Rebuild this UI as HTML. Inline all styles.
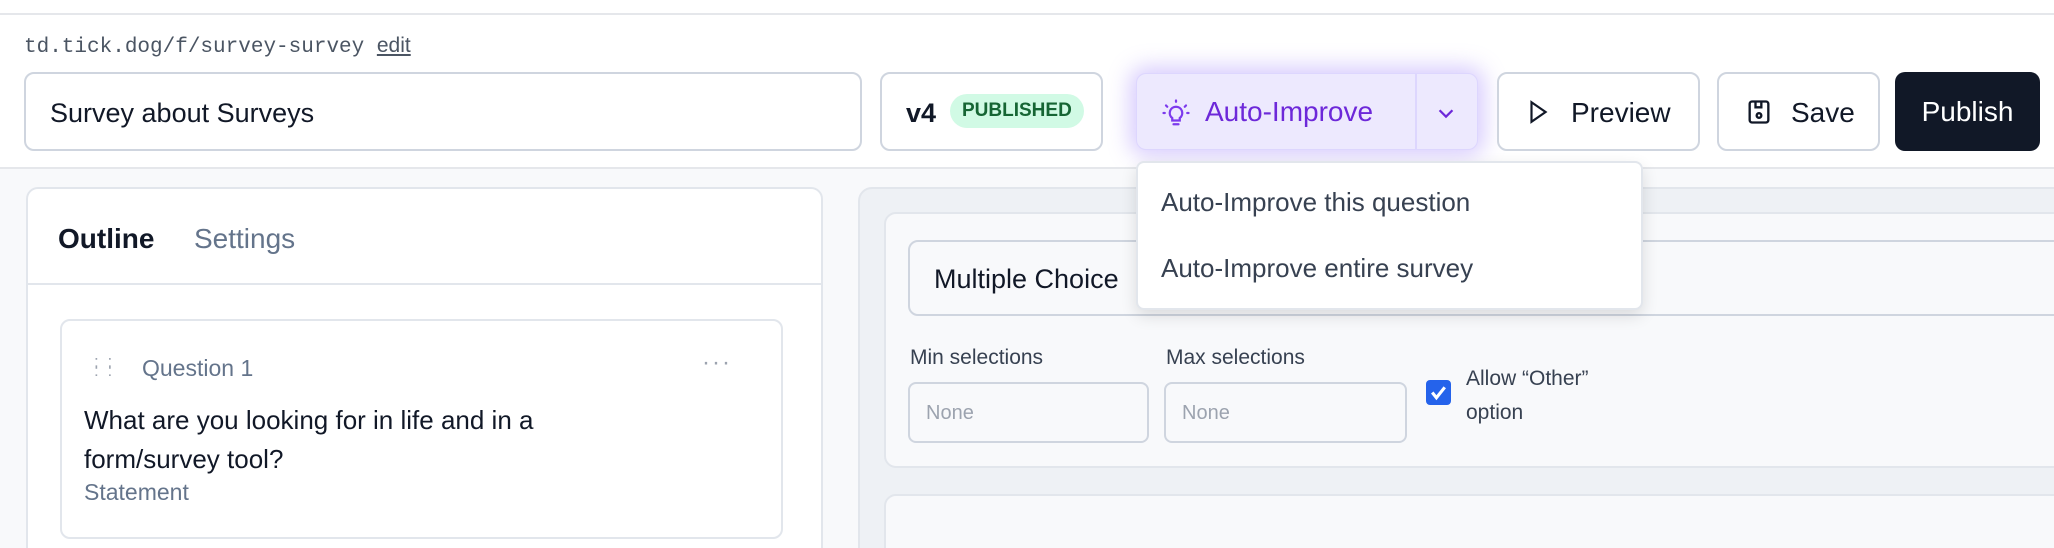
<!DOCTYPE html>
<html><head><meta charset="utf-8"><style>
*{box-sizing:border-box;margin:0;padding:0}
html{width:2054px;height:548px;overflow:hidden}
body{width:2054px;height:548px;overflow:hidden;background:#fff;font-family:"Liberation Sans",sans-serif;color:#111827;position:relative}
.a{position:absolute}
.box{position:absolute;border:2px solid #cfd5df;border-radius:10px;background:#fff}
</style></head><body>
<div class="a" style="left:0;top:13px;width:2054px;height:2px;background:#e5e7eb"></div>
<div class="a" style="left:24px;top:34px;font-family:'Liberation Mono',monospace;font-size:21px;color:#4b5563">td.tick.dog/f/survey-survey <span style="font-family:'Liberation Sans';text-decoration:underline;font-size:21px">edit</span></div>
<div class="box" style="left:24px;top:72px;width:838px;height:79px"><div class="a" style="left:24px;top:24px;font-size:27px">Survey about Surveys</div></div>
<div class="box" style="left:880px;top:72px;width:223px;height:79px"><div class="a" style="left:24px;top:24px;font-size:27px;font-weight:bold">v4</div><div class="a" style="left:68px;top:20px;height:34px;padding:0 12px;border-radius:17px;background:#d1fae5;color:#166534;font-weight:bold;font-size:19px;line-height:34px">PUBLISHED</div></div>
<div class="a" style="left:1136px;top:73px;width:342px;height:77px;border-radius:10px;background:#ede9fe;box-shadow:0 0 22px 6px rgba(167,139,250,.45);border:1px solid #ddd6fe">
 <svg class="a" style="left:24px;top:24px" width="30" height="30" viewBox="0 0 24 24" fill="none" stroke="#7c3aed" stroke-width="1.8" stroke-linecap="round"><path d="M9 18h6M10 21h4M12 7a5 5 0 0 0-3 9v2h6v-2a5 5 0 0 0-3-9z"/><path d="M12 2v1M4 6l1 1M20 6l-1 1M2 12h1M21 12h1"/></svg>
 <div class="a" style="left:68px;top:22px;font-size:28px;color:#6d28d9">Auto-Improve</div>
 <div class="a" style="left:278px;top:0;width:2px;height:75px;background:#ddd6fe"></div>
 <svg class="a" style="left:298px;top:28px" width="22" height="22" viewBox="0 0 24 24" fill="none" stroke="#6d28d9" stroke-width="2.5"><path d="M5 9l7 7 7-7"/></svg>
</div>
<div class="box" style="left:1497px;top:72px;width:203px;height:79px"><svg class="a" style="left:26px;top:24px" width="26" height="28" viewBox="0 0 24 24" fill="none" stroke="#111827" stroke-width="2"><path d="M6 3l13 9-13 9z"/></svg><div class="a" style="left:72px;top:23px;font-size:28px">Preview</div></div>
<div class="box" style="left:1717px;top:72px;width:163px;height:79px"><svg class="a" style="left:26px;top:24px" width="28" height="28" viewBox="0 0 24 24" fill="none" stroke="#111827" stroke-width="2"><rect x="4" y="3" width="16" height="18" rx="2"/><path d="M9 3v5h5V3"/><circle cx="12" cy="15" r="2"/></svg><div class="a" style="left:72px;top:23px;font-size:28px">Save</div></div>
<div class="a" style="left:1895px;top:72px;width:145px;height:79px;background:#111827;border-radius:10px;color:#fff;font-size:28px;text-align:center;line-height:79px">Publish</div>
<div class="a" style="left:0;top:167px;width:2054px;height:381px;background:#f8f9fb;border-top:2px solid #e5e7eb;overflow:hidden">
<div class="a" style="left:26px;top:18px;width:797px;height:380px;background:#fff;border:2px solid #e2e6ec;border-radius:12px">
 <div class="a" style="left:30px;top:34px;font-size:28px;font-weight:bold">Outline</div>
 <div class="a" style="left:166px;top:34px;font-size:28px;color:#64748b">Settings</div>
 <div class="a" style="left:0;top:94px;width:795px;height:2px;background:#e2e6ec"></div>
 <div class="a" style="left:32px;top:130px;width:723px;height:220px;border:2px solid #e2e6ec;border-radius:10px">
  <div class="a" style="left:32px;top:36px;font-size:17px;color:#9ca3af;letter-spacing:2px;line-height:9px">: :<br>: :</div>
  <div class="a" style="left:80px;top:34px;font-size:23px;color:#64748b">Question 1</div>
  <div class="a" style="left:640px;top:28px;font-size:24px;color:#9ca3af;letter-spacing:2px">···</div>
  <div class="a" style="left:22px;top:80px;font-size:26px;line-height:39px;width:560px">What are you looking for in life and in a form/survey tool?</div>
  <div class="a" style="left:22px;top:158px;font-size:23px;color:#64748b">Statement</div>
 </div>
</div>
<div class="a" style="left:858px;top:18px;width:1220px;height:380px;background:#eef1f5;border:2px solid #e2e6ec;border-radius:14px"></div>
<div class="a" style="left:884px;top:43px;width:1200px;height:256px;background:#f8f9fb;border:2px solid #e2e6ec;border-radius:12px">
 <div class="a" style="left:22px;top:26px;width:1200px;height:76px;background:#f8f9fb;border:2px solid #cfd5df;border-radius:10px"><div class="a" style="left:24px;top:22px;font-size:27px">Multiple Choice</div></div>
 <div class="a" style="left:24px;top:132px;font-size:21px;color:#374151">Min selections</div>
 <div class="a" style="left:280px;top:132px;font-size:21px;color:#374151">Max selections</div>
 <div class="a" style="left:22px;top:168px;width:241px;height:61px;border:2px solid #cfd5df;border-radius:8px;background:#f8f9fb"><div class="a" style="left:16px;top:18px;font-size:20px;color:#9ca3af">None</div></div>
 <div class="a" style="left:278px;top:168px;width:243px;height:61px;border:2px solid #cfd5df;border-radius:8px;background:#f8f9fb"><div class="a" style="left:16px;top:18px;font-size:20px;color:#9ca3af">None</div></div>
 <div class="a" style="left:540px;top:166px;width:25px;height:25px;background:#2563eb;border-radius:4px"><svg width="25" height="25" viewBox="0 0 24 24" fill="none" stroke="#fff" stroke-width="3"><path d="M6 12l4 5 8-10"/></svg></div>
 <div class="a" style="left:580px;top:148px;font-size:21px;color:#374151;line-height:34px">Allow “Other”<br>option</div>
</div>
<div class="a" style="left:884px;top:325px;width:1200px;height:80px;background:#f8f9fb;border:2px solid #e2e6ec;border-radius:12px"></div>
</div>
<div class="a" style="left:1136px;top:161px;width:507px;height:149px;background:#fff;border:2px solid #e2e6ec;border-radius:8px;box-shadow:0 6px 16px rgba(0,0,0,.12)">
 <div class="a" style="left:23px;top:24px;font-size:26px;color:#374151">Auto-Improve this question</div>
 <div class="a" style="left:23px;top:90px;font-size:26px;color:#374151">Auto-Improve entire survey</div>
</div>
</body></html>
